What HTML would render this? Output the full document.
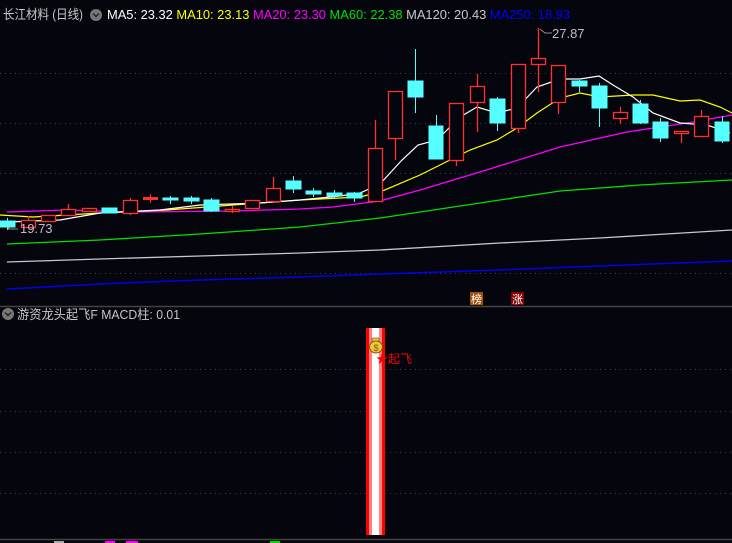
<!DOCTYPE html>
<html><head><meta charset="utf-8"><style>
html,body{margin:0;padding:0;background:#05050d;width:732px;height:543px;overflow:hidden}
svg{display:block}
text{font-family:"Liberation Sans","Noto Sans CJK SC",sans-serif}
</style></head><body>
<svg width="732" height="543" viewBox="0 0 732 543" xmlns="http://www.w3.org/2000/svg">
<rect width="732" height="543" fill="#05050d"/>
<g stroke="#3a3a3a" stroke-dasharray="1,4" stroke-width="1">
<line x1="0" y1="73.5" x2="732" y2="73.5"/><line x1="0" y1="123.5" x2="732" y2="123.5"/>
<line x1="0" y1="173.5" x2="732" y2="173.5"/><line x1="0" y1="273.5" x2="732" y2="273.5"/>
<line x1="0" y1="369.5" x2="732" y2="369.5"/><line x1="0" y1="411.5" x2="732" y2="411.5"/>
<line x1="0" y1="452.5" x2="732" y2="452.5"/><line x1="0" y1="493.5" x2="732" y2="493.5"/>
</g>
<line x1="0" y1="306.5" x2="732" y2="306.5" stroke="#444" stroke-width="1.5"/>
<line x1="0" y1="539.5" x2="732" y2="539.5" stroke="#444" stroke-width="1.5"/>
<polyline fill="none" stroke="#0000ee" stroke-width="1.5" points="7,289 100,284 200,280 300,277 380,274 500,270 600,266 732,261"/>
<polyline fill="none" stroke="#c8c8c8" stroke-width="1.3" points="7,262 100,259 200,256 300,253 380,250 500,243 600,238 732,230"/>
<polyline fill="none" stroke="#00e000" stroke-width="1.3" points="7,244 100,240 200,234 300,227 380,218 480,203 560,191 640,185 732,180"/>
<polyline fill="none" stroke="#ff00ff" stroke-width="1.3" points="7,212 67,210 133,212 233,211 300,209 333,207 380,201 420,190 480,172 560,147 627,132 660,127 693,122 732,115"/>
<polyline fill="none" stroke="#ffff00" stroke-width="1.2" points="0,215 33,217 100,213 167,210 233,205 300,200 360,197 380,192 420,175 450,160 470,150 497,140 517,128 537,113 560,98 580,93 600,97 633,95 653,95 680,101 700,100 720,107 732,113"/>
<polyline fill="none" stroke="#ffffff" stroke-width="1.2" points="7,222 60,220 100,213 160,210 200,205 260,203 300,200 340,196 360,193 380,184 402,160 418,145 437,140 460,117 477,107 497,113 517,108 537,87 560,79 580,79 599,76 613,85 633,97 653,113 680,123 707,125 730,133"/>
<g stroke="#ff3030" stroke-width="1.3" fill="#05050d">
<line x1="28.5" y1="216" x2="28.5" y2="228"/><rect x="21.5" y="220.5" width="14" height="7"/>
<rect x="41.5" y="215.5" width="14" height="6"/>
<line x1="68.5" y1="204" x2="68.5" y2="215"/><rect x="61.5" y="209.5" width="14" height="6"/>
<rect x="82.5" y="208.5" width="14" height="3"/>
<line x1="130.5" y1="198" x2="130.5" y2="215"/><rect x="123.5" y="200.5" width="14" height="13"/>
<rect x="225.5" y="209.5" width="14" height="2"/><line x1="232.5" y1="206" x2="232.5" y2="213"/>
<rect x="245.5" y="200.5" width="14" height="8"/>
<line x1="273.5" y1="177" x2="273.5" y2="203"/><rect x="266.5" y="188.5" width="14" height="13"/>
<line x1="375.5" y1="120" x2="375.5" y2="201"/><rect x="368.5" y="148.5" width="14" height="53"/>
<line x1="395.5" y1="138" x2="395.5" y2="160"/><rect x="388.5" y="91.5" width="14" height="47"/>
<line x1="456.5" y1="160" x2="456.5" y2="166"/><rect x="449.5" y="103.5" width="14" height="57"/>
<line x1="477.5" y1="74" x2="477.5" y2="132"/><rect x="470.5" y="86.5" width="14" height="16"/>
<line x1="518.5" y1="128" x2="518.5" y2="133"/><rect x="511.5" y="64.5" width="14" height="64"/>
<line x1="538.5" y1="28" x2="538.5" y2="92"/><rect x="531.5" y="58.5" width="14" height="6"/>
<line x1="558.5" y1="102" x2="558.5" y2="114"/><rect x="551.5" y="65.5" width="14" height="37"/>
<line x1="620.5" y1="107" x2="620.5" y2="124"/><rect x="613.5" y="112.5" width="14" height="6"/>
<line x1="681.5" y1="131" x2="681.5" y2="143"/><rect x="674.5" y="131.5" width="14" height="2"/>
<line x1="701.5" y1="110" x2="701.5" y2="137"/><rect x="694.5" y="116.5" width="14" height="20"/>
</g>
<rect x="143" y="197" width="15" height="3" fill="#ff3030"/><line x1="150.5" y1="194" x2="150.5" y2="203" stroke="#ff3030"/>
<g fill="#55ffff" stroke="#55ffff">
<line x1="7.5" y1="218" x2="7.5" y2="230"/><rect x="0" y="221" width="15" height="6"/>
<rect x="102" y="208" width="15" height="5"/>
<line x1="170.5" y1="196" x2="170.5" y2="204"/><rect x="163" y="198" width="15" height="2"/>
<line x1="191.5" y1="196" x2="191.5" y2="204"/><rect x="184" y="198" width="15" height="3"/>
<line x1="211.5" y1="198" x2="211.5" y2="212"/><rect x="204" y="200" width="15" height="11"/>
<line x1="293.5" y1="176" x2="293.5" y2="193"/><rect x="286" y="181" width="15" height="8"/>
<line x1="313.5" y1="188" x2="313.5" y2="197"/><rect x="306" y="191" width="15" height="3"/>
<line x1="334.5" y1="190" x2="334.5" y2="198"/><rect x="327" y="193" width="15" height="3"/>
<line x1="354.5" y1="192" x2="354.5" y2="202"/><rect x="347" y="193" width="15" height="5"/>
<line x1="415.5" y1="49" x2="415.5" y2="113"/><rect x="408" y="81" width="15" height="16"/>
<line x1="436.5" y1="115" x2="436.5" y2="159"/><rect x="429" y="126" width="14" height="33"/>
<line x1="497.5" y1="97" x2="497.5" y2="131"/><rect x="490" y="99" width="15" height="24"/>
<line x1="579.5" y1="80" x2="579.5" y2="92"/><rect x="572" y="81" width="15" height="5"/>
<line x1="599.5" y1="83" x2="599.5" y2="127"/><rect x="592" y="86" width="15" height="22"/>
<line x1="640.5" y1="100" x2="640.5" y2="124"/><rect x="633" y="104" width="15" height="19"/>
<line x1="660.5" y1="118" x2="660.5" y2="142"/><rect x="653" y="122" width="15" height="16"/>
<line x1="722.5" y1="116" x2="722.5" y2="143"/><rect x="715" y="122" width="14" height="19"/>
</g>
<polyline points="540,29 545,33 552,33" fill="none" stroke="#bbb" stroke-width="0.8"/>
<text x="552" y="38" font-size="13" fill="#c0c0c0">27.87</text>
<polyline points="12,224 8,229 18,229" fill="none" stroke="#bbb" stroke-width="0.8"/>
<text x="20" y="233" font-size="13" fill="#c0c0c0">19.73</text>
<rect x="470" y="292" width="13" height="13" fill="#a0520a"/><text x="476.5" y="303" font-size="11" fill="#fff" text-anchor="middle">榜</text>
<rect x="511" y="292" width="13" height="13" fill="#8a0000"/><text x="517.5" y="303" font-size="11" fill="#fff" text-anchor="middle">涨</text>
<text x="3" y="19" font-size="13" fill="#c8c8c8" textLength="80" lengthAdjust="spacingAndGlyphs">长江材料 (日线)</text>
<circle cx="96" cy="15" r="6" fill="#777"/><polyline points="93,13.5 96,16.5 99,13.5" fill="none" stroke="#222" stroke-width="1.5"/>
<text x="107" y="19" font-size="13" textLength="463" lengthAdjust="spacingAndGlyphs"><tspan fill="#ffffff">MA5: 23.32 </tspan><tspan fill="#ffff00">MA10: 23.13 </tspan><tspan fill="#ff00ff">MA20: 23.30 </tspan><tspan fill="#00e000">MA60: 22.38 </tspan><tspan fill="#c8c8c8">MA120: 20.43 </tspan><tspan fill="#0000ff">MA250: 18.93</tspan></text>
<circle cx="8" cy="314" r="6" fill="#777"/><polyline points="5,312.5 8,315.5 11,312.5" fill="none" stroke="#222" stroke-width="1.5"/>
<text x="17" y="319" font-size="13" fill="#c8c8c8" textLength="163" lengthAdjust="spacingAndGlyphs">游资龙头起飞F MACD柱: 0.01</text>
<rect x="366" y="328" width="19" height="207" fill="#ff0000"/>
<rect x="369" y="328" width="13" height="207" fill="#ff8080"/>
<rect x="372" y="328" width="7" height="207" fill="#ffffff"/>
<ellipse cx="376" cy="347" rx="6.5" ry="6" fill="#e8c840" stroke="#7a5a00"/>
<rect x="372" y="338" width="7" height="3" fill="#e8c840" stroke="#7a5a00" stroke-width="0.6"/>
<text x="376" y="351" font-size="9" fill="#a05000" text-anchor="middle">$</text>
<text x="376" y="363" font-size="12" fill="#ff0000">★起飞</text>
<rect x="105" y="541" width="10" height="2" fill="#ff00ff"/><rect x="126" y="541" width="12" height="2" fill="#ff00ff"/>
<rect x="270" y="541" width="10" height="2" fill="#00e000"/><rect x="54" y="541" width="10" height="2" fill="#aaa"/>
</svg>
</body></html>
